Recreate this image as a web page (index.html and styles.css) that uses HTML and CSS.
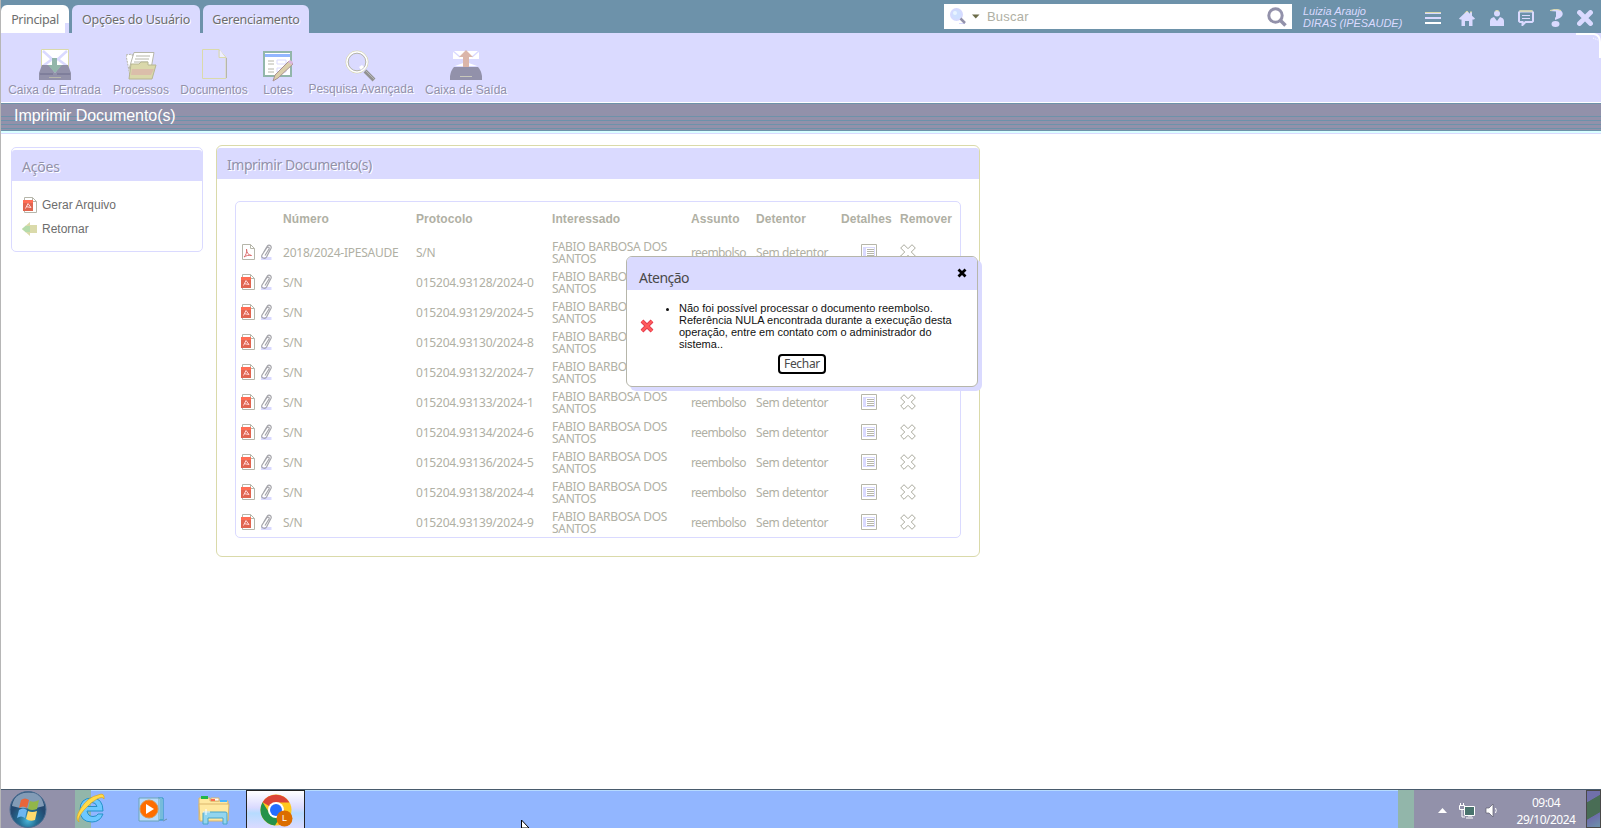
FILE: index.html
```
<!DOCTYPE html>
<html lang="pt-BR">
<head>
<meta charset="utf-8">
<title>Imprimir Documento(s)</title>
<link rel="stylesheet" href="styles.css">
</head>
<body>
<svg class="defs" width="0" height="0" aria-hidden="true">
  <symbol id="pdf" viewBox="0 0 15 16"><path d="M1.500 3V.5h8l4 4v11h-12V13M9.500 .5v4h4" fill="#fff" stroke="#b6b6aa"/><path d="M0 3h10v11H0z" fill="#e06550"/><path d="M0 3h10v3H0z" fill="#ff6d55"/><path d="M2.500 11.500L5 6.500l3 4-4.500-.8" fill="none" stroke="#ffdada"/></symbol>
  <symbol id="pdf-plain" viewBox="0 0 15 16"><path d="M1.500 .5h8l4 4v11h-12zM9.500 .5v4h4" fill="#fff" stroke="#b6b6aa"/><path d="M3 13c2-1.500 3-5 2.500-8 .2 3.500 1.500 6 5 6.500-3-.6-5 0-7.500 1.500z" fill="none" stroke="#db6d6d"/></symbol>
  <symbol id="clip" viewBox="0 0 13 16"><path d="M1 14.500h10.500" stroke="#dadaff" stroke-width="3"/><path d="M3.500 8.500l3.500-6c1.300-2.500 5-1 4 1.800L6.500 13c-1.500 2.500-6 1-4.500-2l5-7.500c1.500-1 2.500 0 2 1.500L5 11.500" fill="none" stroke="#a4a4aa" stroke-width="1.200"/></symbol>
  <symbol id="details" viewBox="0 0 16 16"><path d="M.5 .5h15v15H.5z" fill="#fff" stroke="#b6b6aa"/><path d="M2.500 3.500h11v9h-11z" fill="#fff" stroke="#dadaff"/><path d="M2 3h3v10H2zM2 3h12v1H2z" fill="#dadaff"/><path d="M6 5.500h7M6 7.500h7M6 9.500h7M6 11.500h7" stroke="#b6b6aa"/></symbol>
  <symbol id="remove" viewBox="0 0 16 16"><path d="M4 .7l4 4 4-4L15.300 4l-4 4 4 4-3.300 3.300-4-4-4 4L.7 12l4-4-4-4z" fill="#fff" stroke="#a9a99c"/></symbol>
</svg>

<header class="topbar">
  <nav class="tabs">
    <a class="tab tab-active">Principal</a>
    <a class="tab tab-user">Opções do Usuário</a>
    <a class="tab tab-admin">Gerenciamento</a>
  </nav>
  <div class="search">
    <svg width="16" height="17" viewBox="0 0 16 17"><path d="M9 15.500h6" stroke="#dadaff"/><circle cx="6.500" cy="6.500" r="5.500" fill="#cfe0ff" stroke="#d6dbff" stroke-width="2"/><circle cx="5" cy="5" r="2" fill="#e8f4ff"/><path d="M10.500 10.500l4.500 4.500" stroke="#9291aa" stroke-width="2.500"/></svg>
    <svg class="caret" width="8" height="5" viewBox="0 0 8 5"><path d="M0 .5h7.500L3.750 4.500z" fill="#6d6d49"/></svg>
    <span class="search-text">Buscar</span>
    <svg width="20" height="20" viewBox="0 0 20 20"><circle cx="8.500" cy="8.500" r="6.700" fill="none" stroke="#9291aa" stroke-width="3"/><path d="M13 13l5.500 5.500" stroke="#9291aa" stroke-width="3.500"/></svg>
  </div>
  <div class="user"><span>Luizia Araujo</span><span>DIRAS (IPESAUDE)</span></div>
  <div class="top-icons">
    <svg width="16" height="14" viewBox="0 0 16 14"><path d="M0 2h16M0 7h16" stroke="#dadaff" stroke-width="2"/><path d="M0 1.500h16" stroke="#dadaaa"/><path d="M0 12h16" stroke="#fff" stroke-width="2"/></svg>
    <svg width="16" height="16" viewBox="0 0 16 16"><path d="M0 8.500L8 1l3 2.800V2h2v3.700l3 2.800-1 1h-1.500V16H10v-5H6v5H2.500V9.500H1z" fill="#dadaff"/><path d="M5.500 3.300L8 1l1.500 1.400M11 2h2" stroke="#dadaaa" fill="none"/></svg>
    <svg width="14" height="16" viewBox="0 0 14 16"><circle cx="7" cy="3.500" r="3" fill="#dadaff"/><path d="M5 1.300a3 3 0 014 0" stroke="#dadaaa" fill="none"/><path d="M0 16v-5q0-3 4-4l3 4 3-4q4 1 4 4v5z" fill="#dadaff"/></svg>
    <svg width="16" height="16" viewBox="0 0 16 16"><path d="M2 1.500h12l1 1V11l-1 1H7.500l-3 3v-3H2l-1-1V2.500z" fill="none" stroke="#dadaff" stroke-width="2"/><path d="M1.500 1h13" stroke="#dadaaa" stroke-width="1.500"/><path d="M4 5.500h8M4 8.500h8" stroke="#dadaff" stroke-width="1.200"/></svg>
    <svg width="13" height="18" viewBox="0 0 13 18"><path d="M0 2Q6-1 11 1.500q4 4-1 7.500L5 11V9l1-1.500V2.500z" fill="#dadaff"/><path d="M0 1.500Q6-1 11 1.500" stroke="#dadaaa" fill="none"/><ellipse cx="5.500" cy="15" rx="4" ry="3" fill="#dadaff"/></svg>
    <svg width="16" height="16" viewBox="0 0 16 16"><path d="M2.500 2.500l11 11M13.500 2.500l-11 11" stroke="#dadaff" stroke-width="4.800" stroke-linecap="round"/></svg>
  </div>
</header>

<nav class="toolbar">
  <a class="tool tool-inbox"><svg width="32" height="31" viewBox="0 0 32 31"><path d="M2.500 .5h27V20h-27z" fill="#fff" stroke="#dadaaa"/><path d="M4 2l10 9M28 2L18 11M4 17l8-6M28 17l-8-6" stroke="#dadaff" stroke-width="2.500"/><path d="M3 16h7l6 8 6-8h7l3 8v7H0v-7z" fill="#9291aa"/><path d="M13 9h5v7h5l-7 8-7-8h4z" fill="#92b6aa"/><path d="M1 25h13M18 25h13" stroke="#6d6d8c"/><path d="M10 28.500h12" stroke="#b6b6aa"/></svg><span>Caixa de Entrada</span></a>
  <a class="tool tool-processes"><svg width="31" height="28" viewBox="0 0 31 28"><path d="M0 3l6-1 4 22H4z" fill="#fff" stroke="#b6b6aa" stroke-dasharray="2 1"/><path d="M8 .5h20L25 17H3z" fill="#fff" stroke="#b6b6aa"/><path d="M10 4h14M9 7h14M8 10h14" stroke="#b6b6aa"/><path d="M5 12h8l2-2h7v3h8l-4 14H3z" fill="#dad8aa" stroke="#b6b692"/><path d="M6 17h22l-3 6H5z" fill="#dbb6aa" opacity=".75"/></svg><span>Processos</span></a>
  <a class="tool tool-docs"><svg width="25" height="30" viewBox="0 0 25 30"><path d="M.5 .5H17l7 8v21H.5zM17 .5v8h7" fill="#dadaff" stroke="#dadaaa"/><path d="M24.500 9v20" stroke="#b6b6aa"/><path d="M18 1l5 7h-5z" fill="#eef"/></svg><span>Documentos</span></a>
  <a class="tool tool-batches"><svg width="31" height="31" viewBox="0 0 31 31"><path d="M1 1h27v24H1z" fill="#fff" stroke="#92b6aa" stroke-width="2"/><path d="M2 3h25v3H2z" fill="#92b6ff"/><path d="M5 10h6M5 13h6M5 18h6M5 21h6" stroke="#b6b6aa"/><path d="M14 9h9v4h-9zM14 17h9v4h-9z" fill="#fff" stroke="#dadaff"/><path d="M10 30l2-6L26 10l4 3-15 14z" fill="#dbcfaa" stroke="#aa9292"/><path d="M25 11l2-2 3 2-1 3z" fill="#dbb6db"/></svg><span>Lotes</span></a>
  <a class="tool tool-search"><svg width="32" height="32" viewBox="0 0 32 32"><circle cx="12" cy="12" r="11" fill="#dadaff" stroke="#dadaaa"/><circle cx="12" cy="12" r="10" fill="none" stroke="#fff" stroke-width="1.500"/><circle cx="12" cy="12" r="8.800" fill="none" stroke="#b6b6aa"/><path d="M14 17l3-2 2 2-3 3z" fill="#fff"/><path d="M20 21l9 9" stroke="#929292" stroke-width="4"/><path d="M21 21l8 8" stroke="#b6b6b6"/></svg><span>Pesquisa Avançada</span></a>
  <a class="tool tool-outbox"><svg width="32" height="30" viewBox="0 0 32 30"><path d="M3 1h26v8H3zM5 16l11-4 11 4z" fill="#fff"/><path d="M3 1l7 6M29 1l-7 6" stroke="#dadaff" stroke-width="1.500"/><path d="M4 17h24q3 3 4 9v4H0v-4q1-6 4-9z" fill="#9291aa"/><path d="M10 26.500h12" stroke="#c8c8bb"/><path d="M16 0l7 7h-4v10h-6V7H9z" fill="#dbb6aa"/></svg><span>Caixa de Saída</span></a>
  <svg class="toolbar-corner" width="26" height="25" viewBox="0 0 26 25"><path d="M1 1h18q6 1 6 8v16" fill="none" stroke="#fff" stroke-width="2"/><path d="M18 5l5 2" stroke="#fff" stroke-dasharray="1 1"/></svg>
</nav>
<h1 class="title">Imprimir Documento(s)</h1>

<main class="content">
  <aside class="actions">
    <h2 class="panel-title">Ações</h2>
    <ul class="action-list">
      <li><svg width="15" height="16"><use href="#pdf"/></svg>Gerar Arquivo</li>
      <li><svg width="16" height="14" viewBox="0 0 16 14"><path d="M0 7l8-7v3h7v8H8v3z" fill="#dadaaa"/><path d="M0 7l4-3.500V10.500zM4 4h4v6H4z" fill="#b6dbaa"/></svg>Retornar</li>
    </ul>
  </aside>
  <section class="documents">
    <h2 class="panel-title">Imprimir Documento(s)</h2>
    <div class="grid">
      <div class="row head"><span></span><span>Número</span><span>Protocolo</span><span>Interessado</span><span>Assunto</span><span>Detentor</span><span>Detalhes</span><span>Remover</span></div>
      <div class="row"><span class="files"><svg width="15" height="16"><use href="#pdf-plain"/></svg><svg width="13" height="16"><use href="#clip"/></svg></span><span class="number">2018/2024-IPESAUDE</span><span>S/N</span><span class="person">FABIO BARBOSA DOS<br>SANTOS</span><span class="subject">reembolso</span><span class="holder">Sem detentor</span><span class="det"><svg width="16" height="16"><use href="#details"/></svg></span><span><svg width="16" height="16"><use href="#remove"/></svg></span></div>
      <div class="row"><span class="files"><svg width="15" height="16"><use href="#pdf"/></svg><svg width="13" height="16"><use href="#clip"/></svg></span><span>S/N</span><span class="protocol">015204.93128/2024-0</span><span class="person">FABIO BARBOSA DOS<br>SANTOS</span><span class="subject">reembolso</span><span class="holder">Sem detentor</span><span class="det"><svg width="16" height="16"><use href="#details"/></svg></span><span><svg width="16" height="16"><use href="#remove"/></svg></span></div>
      <div class="row"><span class="files"><svg width="15" height="16"><use href="#pdf"/></svg><svg width="13" height="16"><use href="#clip"/></svg></span><span>S/N</span><span class="protocol">015204.93129/2024-5</span><span class="person">FABIO BARBOSA DOS<br>SANTOS</span><span class="subject">reembolso</span><span class="holder">Sem detentor</span><span class="det"><svg width="16" height="16"><use href="#details"/></svg></span><span><svg width="16" height="16"><use href="#remove"/></svg></span></div>
      <div class="row"><span class="files"><svg width="15" height="16"><use href="#pdf"/></svg><svg width="13" height="16"><use href="#clip"/></svg></span><span>S/N</span><span class="protocol">015204.93130/2024-8</span><span class="person">FABIO BARBOSA DOS<br>SANTOS</span><span class="subject">reembolso</span><span class="holder">Sem detentor</span><span class="det"><svg width="16" height="16"><use href="#details"/></svg></span><span><svg width="16" height="16"><use href="#remove"/></svg></span></div>
      <div class="row"><span class="files"><svg width="15" height="16"><use href="#pdf"/></svg><svg width="13" height="16"><use href="#clip"/></svg></span><span>S/N</span><span class="protocol">015204.93132/2024-7</span><span class="person">FABIO BARBOSA DOS<br>SANTOS</span><span class="subject">reembolso</span><span class="holder">Sem detentor</span><span class="det"><svg width="16" height="16"><use href="#details"/></svg></span><span><svg width="16" height="16"><use href="#remove"/></svg></span></div>
      <div class="row"><span class="files"><svg width="15" height="16"><use href="#pdf"/></svg><svg width="13" height="16"><use href="#clip"/></svg></span><span>S/N</span><span class="protocol">015204.93133/2024-1</span><span class="person">FABIO BARBOSA DOS<br>SANTOS</span><span class="subject">reembolso</span><span class="holder">Sem detentor</span><span class="det"><svg width="16" height="16"><use href="#details"/></svg></span><span><svg width="16" height="16"><use href="#remove"/></svg></span></div>
      <div class="row"><span class="files"><svg width="15" height="16"><use href="#pdf"/></svg><svg width="13" height="16"><use href="#clip"/></svg></span><span>S/N</span><span class="protocol">015204.93134/2024-6</span><span class="person">FABIO BARBOSA DOS<br>SANTOS</span><span class="subject">reembolso</span><span class="holder">Sem detentor</span><span class="det"><svg width="16" height="16"><use href="#details"/></svg></span><span><svg width="16" height="16"><use href="#remove"/></svg></span></div>
      <div class="row"><span class="files"><svg width="15" height="16"><use href="#pdf"/></svg><svg width="13" height="16"><use href="#clip"/></svg></span><span>S/N</span><span class="protocol">015204.93136/2024-5</span><span class="person">FABIO BARBOSA DOS<br>SANTOS</span><span class="subject">reembolso</span><span class="holder">Sem detentor</span><span class="det"><svg width="16" height="16"><use href="#details"/></svg></span><span><svg width="16" height="16"><use href="#remove"/></svg></span></div>
      <div class="row"><span class="files"><svg width="15" height="16"><use href="#pdf"/></svg><svg width="13" height="16"><use href="#clip"/></svg></span><span>S/N</span><span class="protocol">015204.93138/2024-4</span><span class="person">FABIO BARBOSA DOS<br>SANTOS</span><span class="subject">reembolso</span><span class="holder">Sem detentor</span><span class="det"><svg width="16" height="16"><use href="#details"/></svg></span><span><svg width="16" height="16"><use href="#remove"/></svg></span></div>
      <div class="row"><span class="files"><svg width="15" height="16"><use href="#pdf"/></svg><svg width="13" height="16"><use href="#clip"/></svg></span><span>S/N</span><span class="protocol">015204.93139/2024-9</span><span class="person">FABIO BARBOSA DOS<br>SANTOS</span><span class="subject">reembolso</span><span class="holder">Sem detentor</span><span class="det"><svg width="16" height="16"><use href="#details"/></svg></span><span><svg width="16" height="16"><use href="#remove"/></svg></span></div>
    </div>
  </section>
</main>

<div class="dialog" role="alertdialog">
  <div class="dialog-head"><span>Atenção</span><svg width="10" height="10" viewBox="0 0 10 10"><path d="M1.500 1.500l7 7M8.500 1.500l-7 7" stroke="#000" stroke-width="2.800"/></svg></div>
  <div class="dialog-body">
    <svg width="14" height="14" viewBox="0 0 14 14"><path d="M2 2l10 10M12 2L2 12" stroke="#e03a50" stroke-width="4"/><path d="M2 2l10 10M12 2L2 12" stroke="#ff5b5b" stroke-width="2.400"/></svg>
    <ul class="message"><li>Não foi possível processar o documento reembolso.<br>Referência NULA encontrada durante a execução desta<br>operação, entre em contato com o administrador do<br>sistema..</li></ul>
  </div>
  <button class="close-button">Fechar</button>
</div>

<footer class="taskbar">
  <div class="start"><svg width="38" height="37" viewBox="0 0 38 37"><defs><radialGradient id="orb" cx=".5" cy=".8"><stop offset="0" stop-color="#49b6db"/><stop offset=".5" stop-color="#246d92"/><stop offset="1" stop-color="#244970"/></radialGradient></defs><circle cx="19" cy="18.500" r="18" fill="url(#orb)" stroke="#496d92"/><path d="M3 15Q5 2 19 1.500T35 15Q19 20 3 15z" fill="#b6c8db" opacity=".65"/><path d="M12 9q4-3 8 0l-2 8q-4-3-8 0z" fill="#e8653a"/><path d="M21 10q4 2 9-1l-2 9q-5 2-9 0z" fill="#92b64a"/><path d="M10 19q4-3 8 0l-2 8q-4-3-8 0z" fill="#6db6f0"/><path d="M19 20q4 2 9 0l-2 9q-5 2-9-1z" fill="#ffdb6d"/></svg></div>
  <div class="strip"></div>
  <div class="apps">
    <svg class="ie" width="32" height="32" viewBox="0 0 32 32"><path fill-rule="evenodd" d="M28 19H12q1 5.500 6 5.500 4 0 5-2.500h5q-3 8-11 8Q5 30 5 18T17 6q11 0 11 13zM12 14.500h10q-1-4-5-4t-5 4z" fill="#6dc8ff" stroke="#2492c8"/><path d="M4 30Q-1 27 6 16T23 3q7-3 6 4-1-3-7 0T9 18 4 30z" fill="#ffdb49" stroke="#dba424" stroke-width=".7"/></svg>
    <svg class="player" width="30" height="26" viewBox="0 0 30 26"><path d="M20 1h5v22h-8z" fill="#c8e6ff" stroke="#2492b6"/><path d="M1 1h20v23H1z" fill="#b6dbff" stroke="#6da4b6"/><path d="M23 2v21" stroke="#2492b6"/><path d="M25 24l4-2" stroke="#6d92aa"/><circle cx="11" cy="12" r="9" fill="#ff6d00" stroke="#db9249"/><path d="M8 7v10l8-5z" fill="#fff"/></svg>
    <svg class="folder" width="32" height="30" viewBox="0 0 32 30"><path d="M1 3h11v3h18v19H1z" fill="#ffe8a0" stroke="#dbb66d"/><path d="M3 1h7v3H3z" fill="#24b649"/><path d="M13 3h8v3h-8z" fill="#fff" stroke="#dbb66d"/><path d="M13 4h4v2h-4z" fill="#ff6d49"/><path d="M22 5h7v2h-7z" fill="#49b6ff"/><path d="M1 9h30l-1 17H2z" fill="#ffe8a0" stroke="#dbb66d"/><path d="M5 29V18q0-1 2-1h20q2 0 2 1v11h-4v-6H10v6z" fill="#92d5ef" stroke="#49a4c8"/><path d="M8 14v6M5 17h7" stroke="#fff"/></svg>
    <div class="app-active"><svg width="33" height="33" viewBox="0 0 33 33"><circle cx="16" cy="16" r="15.500" fill="#ffc81f"/><path d="M16 16L2.600 8.200A15.500 15.500 0 0129.400 8.500H16z" fill="#db4437"/><path d="M2.600 8.200A15.500 15.500 0 0015 31.500L22 20H10z" fill="#24924a"/><circle cx="16" cy="16" r="8" fill="#fff"/><circle cx="16" cy="16" r="6" fill="#246dff"/><circle cx="24.500" cy="24.500" r="8" fill="#db6d00"/></svg><span class="profile">L</span></div>
  </div>
  <div class="strip"></div>
  <div class="tray">
    <svg class="up" width="9" height="5" viewBox="0 0 9 5"><path d="M0 5l4.500-5L9 5z" fill="#fff"/></svg>
    <svg class="net" width="16" height="16" viewBox="0 0 16 16"><path d="M5.500 3.500h10v9h-10z" fill="#49736d" stroke="#fff"/><path d="M9 13h4M7 15h7" stroke="#fff"/><path d="M.5 2.500h5v4h-5zM1.500 0v2M4.500 0v2M3 7v7h3" fill="#9291aa" stroke="#fff"/></svg>
    <svg class="sound" width="14" height="15" viewBox="0 0 14 15"><path d="M1 5h3l4-4v13l-4-4H1z" fill="#fff" stroke="#5b5b6d" stroke-width=".7"/><path d="M10.500 5q1.500 2.500 0 5" stroke="#fff" fill="none"/></svg>
    <div class="clock"><span>09:04</span><span>29/10/2024</span></div>
  </div>
  <div class="show-desktop"></div>
</footer>
<svg class="cursor" width="9" height="8" viewBox="0 0 9 8"><path d="M.5 0v8h7.500z" fill="#fff" stroke="#000"/></svg>
</body>
</html>
```
FILE: styles.css
```
* { box-sizing: border-box; }
body {
  margin: 0; width: 1601px; height: 828px; overflow: hidden;
  display: flex; flex-direction: column;
  position: relative; background: #fff;
  border-left: 1px solid #b6b6b6;
  font-family: "Liberation Sans", Arial, sans-serif; font-size: 12px; color: #b0b0a4;
}
svg { display: block; flex: none; }
.defs { position: absolute; }
h1, h2, ul { margin: 0; padding: 0; font-weight: normal; }

.topbar { flex: none; height: 33px; display: flex; background: #6d92aa; }
.tabs { width: 943px; padding-top: 5px; display: flex; gap: 3px; }
.tab {
  height: 28px; line-height: 29px; text-align: center; white-space: nowrap;
  background: #dadaff; border-radius: 6px 6px 0 0; color: #6d6d6d;
  font-family: "Noto Sans", sans-serif; font-size: 12.500px; text-shadow: 1px 1px #fff;
}
.tab-active { width: 68px; background: linear-gradient(#fff, #fff) 0 0 / 64px 100% no-repeat, linear-gradient(#fff 18px, #dadaff 18px); letter-spacing: -.35px; }
.tab-user { width: 128px; letter-spacing: -.2px; }
.tab-admin { width: 106px; letter-spacing: -.25px; }

.search { width: 348px; height: 25px; margin-top: 4px; padding: 0 5px 0 6px; background: #fff; display: flex; align-items: center; }
.caret { margin-left: 6px; }
.search-text { flex: 1; margin-left: 7px; font-size: 13px; letter-spacing: .2px; }
.user { width: 133px; padding: 5px 0 0 11px; display: flex; flex-direction: column; font-style: italic; font-size: 11px; line-height: 12px; color: #dadaff; white-space: nowrap; letter-spacing: -.02px; }
.top-icons { display: grid; grid-template-columns: 34px 31px 28px 32px 27px 16px; align-items: center; height: 36px; }

.toolbar { flex: none; height: 70px; display: flex; background: #dadaff; border-bottom: 1px solid #fff; color: #9291aa; position: relative; }
.tool { flex: none; display: flex; flex-direction: column; align-items: center; justify-content: flex-end; height: 64px; white-space: nowrap; text-shadow: 1px 1px #fff; }
.tool span { line-height: 14px; }
.tool svg { margin-bottom: 3px; }
.tool-inbox { width: 107px; }
.tool-processes { width: 66px; }
.tool-docs { width: 80px; }
.tool-docs svg { margin-bottom: 4px; }
.tool-batches { width: 48px; }
.tool-batches svg { margin-bottom: 1px; }
.tool-search { width: 118px; height: 63px; }
.tool-search svg { margin-bottom: 0; }
.tool-outbox { width: 92px; }
.toolbar-corner { position: absolute; right: 0; top: 0; }

.title {
  flex: none; height: 31px; padding-left: 13px; line-height: 23px; font-size: 16px; letter-spacing: -.05px; color: #fff;
  border-top: 1px solid #6d92aa; border-bottom: 1px solid #dadaff;
  background:
    linear-gradient(#daffff, #daffff) 0 27px / 100% 2px no-repeat,
    linear-gradient(#6d92aa, #6d92aa) 0 26px / 100% 1px no-repeat,
    linear-gradient(#6d92aa, #6d92aa) 0 24px / 100% 1px no-repeat,
    linear-gradient(#6d92aa, #6d92aa) 0 20px / 100% 1px no-repeat,
    linear-gradient(#6d92aa, #6d92aa) 0 16px / 100% 1px no-repeat,
    linear-gradient(#6d92aa, #6d92aa) 0 12px / 100% 1px no-repeat,
    #9291aa;
}

.content { flex: 1; display: flex; align-items: flex-start; gap: 13px; padding: 11px 0 0 10px; }
.actions { width: 192px; height: 105px; margin-top: 2px; padding-top: 2px; border: 1px solid #dadaff; border-radius: 5px; }
.panel-title {
  height: 31px; padding-left: 10px; line-height: 33px; background: #dadaff; color: #9291aa;
  border-radius: 3px 3px 0 0; font-family: "Noto Sans", sans-serif; font-size: 14px; text-shadow: 1px 1px #fff; letter-spacing: -.2px;
}
.action-list { list-style: none; padding: 12px 11px; color: #6d6d6d; }
.action-list li { display: flex; align-items: center; gap: 4px; height: 24px; }
.action-list li:last-child { margin-left: -1px; }
.documents { width: 764px; height: 412px; padding-top: 2px; border: 1px solid #dadaaa; border-radius: 6px; }
.documents .panel-title { letter-spacing: -.45px; }

.grid { width: 726px; height: 337px; margin: 22px 0 0 18px; border: 1px solid #dadaff; border-radius: 5px; font-family: "Noto Sans", sans-serif; }
.row { height: 30px; padding-left: 5px; display: grid; grid-template-columns: 42px 133px 136px 139px 65px 85px 59px 60px; align-items: center; white-space: nowrap; letter-spacing: -.3px; }
.head { height: 35px; padding-bottom: 2px; font-family: "Liberation Sans", Arial, sans-serif; font-weight: bold; letter-spacing: .08px; }
.files { display: flex; gap: 4px; }
.number { letter-spacing: -.23px; }
.protocol { letter-spacing: -.2px; }
.person { line-height: 12px; padding-top: 1px; }
.subject { letter-spacing: -.6px; }
.holder { letter-spacing: -.4px; }
.det { padding-left: 20px; }

.dialog { position: absolute; left: 625px; top: 256px; width: 352px; height: 131px; background: #fff; border: 1px solid #b6b6aa; border-radius: 6px; box-shadow: 4px 4px #dadaff; color: #111; }
.dialog-head { height: 33px; padding: 0 10px 0 12px; display: flex; align-items: center; justify-content: space-between; background: #dadaff; border-radius: 5px 5px 0 0; color: #494949; font-family: "Noto Sans", sans-serif; font-size: 14px; letter-spacing: -.5px; }
.dialog-head span { padding-top: 7px; }
.dialog-head svg { margin-bottom: 2px; }
.dialog-body { display: flex; align-items: center; padding: 12px 0 0 13px; }
.message { padding-left: 25px; font-size: 11px; line-height: 12px; white-space: nowrap; }
.close-button { display: block; width: 48px; height: 20px; margin: 4px 0 0 151px; padding: 0; background: #fff; border: 2px solid #000; border-radius: 4px; font-family: "Noto Sans", sans-serif; font-size: 12px; line-height: 16px; letter-spacing: -.3px; color: #494949; }

.taskbar { flex: none; height: 39px; display: flex; background: #92b6ff; border-top: 1px solid #495b6d; box-shadow: inset 0 1px #b6dbff; }
.start { width: 74px; padding: 1px 0 0 8px; background: #9291aa; }
.strip { width: 16px; background: #92b6aa; }
.apps { width: 1323px; display: flex; margin-left: -16px; }
.ie { margin: 2px 0 0 0; }
.player { margin: 7px 0 0 31px; }
.folder { margin: 5px 0 0 30px; }
.app-active { position: relative; width: 59px; margin-left: 16px; padding: 3px 0 0 13px; border: 1px solid #242424; border-bottom: 0; background: linear-gradient(#fff, #dadaff 45%, #b6dbff 60%, #dadaff); }
.profile { position: absolute; left: 35px; top: 22px; color: #fff; font-size: 9px; }
.tray { width: 172px; display: flex; align-items: flex-start; background: #9291aa; }
.up { margin: 18px 0 0 24px; }
.net { margin: 13px 0 0 12px; }
.sound { margin: 13px 0 0 10px; }
.clock { width: 80px; margin: 4px 0 0 7px; display: flex; flex-direction: column; align-items: center; line-height: 17px; color: #fff; font-family: "Noto Sans", sans-serif; font-size: 12px; letter-spacing: -.5px; }
.show-desktop { flex: 1; border: 1px solid #494949; background: linear-gradient(150deg, #7070aa 25%, #496d55 27%, #496d55 65%, #6d6daa 67%, #6d92aa); }
.cursor { position: absolute; left: 520px; top: 820px; }
```
